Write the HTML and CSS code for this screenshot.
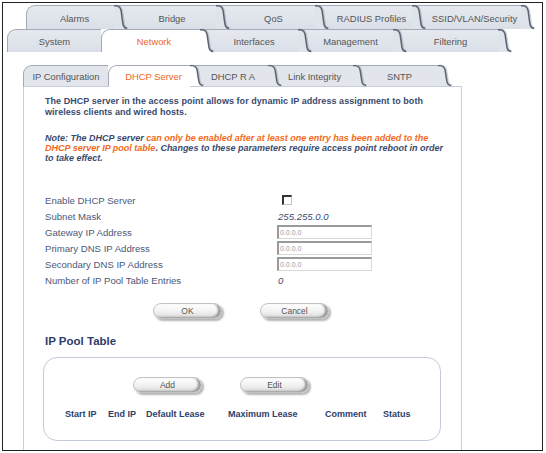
FILE: index.html
```html
<!DOCTYPE html>
<html lang="en">
<head>
    <meta charset="UTF-8">
    <title>DHCP Server</title>
    <link rel="stylesheet" href="styles.css">
</head>
<body>
    <div class="frame">
        <div class="tabs row-top">
            <div class="tab">Alarms<svg class="edge" viewBox="0 0 14 24" preserveAspectRatio="none"><path class="shade" d="M1 1 H3 C6.5 1 7.8 2.8 8.6 5.8 L10.6 19 C11.3 22 12.8 23.3 15 23.3"/><path class="fill" d="M0 0 H2 C6 0 7 2.5 7.8 5.5 L9.8 19 C10.5 22 12 24 14 24 H0 Z"/><path class="line" d="M0 0.75 H2 C5.5 0.75 6.8 2.5 7.6 5.5 L9.6 19 C10.3 22 11.8 23.3 14 23.3"/></svg></div>
            <div class="tab">Bridge<svg class="edge" viewBox="0 0 14 24" preserveAspectRatio="none"><path class="shade" d="M1 1 H3 C6.5 1 7.8 2.8 8.6 5.8 L10.6 19 C11.3 22 12.8 23.3 15 23.3"/><path class="fill" d="M0 0 H2 C6 0 7 2.5 7.8 5.5 L9.8 19 C10.5 22 12 24 14 24 H0 Z"/><path class="line" d="M0 0.75 H2 C5.5 0.75 6.8 2.5 7.6 5.5 L9.6 19 C10.3 22 11.8 23.3 14 23.3"/></svg></div>
            <div class="tab">QoS<svg class="edge" viewBox="0 0 14 24" preserveAspectRatio="none"><path class="shade" d="M1 1 H3 C6.5 1 7.8 2.8 8.6 5.8 L10.6 19 C11.3 22 12.8 23.3 15 23.3"/><path class="fill" d="M0 0 H2 C6 0 7 2.5 7.8 5.5 L9.8 19 C10.5 22 12 24 14 24 H0 Z"/><path class="line" d="M0 0.75 H2 C5.5 0.75 6.8 2.5 7.6 5.5 L9.6 19 C10.3 22 11.8 23.3 14 23.3"/></svg></div>
            <div class="tab">RADIUS Profiles<svg class="edge" viewBox="0 0 14 24" preserveAspectRatio="none"><path class="shade" d="M1 1 H3 C6.5 1 7.8 2.8 8.6 5.8 L10.6 19 C11.3 22 12.8 23.3 15 23.3"/><path class="fill" d="M0 0 H2 C6 0 7 2.5 7.8 5.5 L9.8 19 C10.5 22 12 24 14 24 H0 Z"/><path class="line" d="M0 0.75 H2 C5.5 0.75 6.8 2.5 7.6 5.5 L9.6 19 C10.3 22 11.8 23.3 14 23.3"/></svg></div>
            <div class="tab">SSID/VLAN/Security<svg class="edge" viewBox="0 0 14 24" preserveAspectRatio="none"><path class="shade" d="M1 1 H3 C6.5 1 7.8 2.8 8.6 5.8 L10.6 19 C11.3 22 12.8 23.3 15 23.3"/><path class="fill" d="M0 0 H2 C6 0 7 2.5 7.8 5.5 L9.8 19 C10.5 22 12 24 14 24 H0 Z"/><path class="line" d="M0 0.75 H2 C5.5 0.75 6.8 2.5 7.6 5.5 L9.6 19 C10.3 22 11.8 23.3 14 23.3"/></svg></div>
        </div>

        <div class="tabs row-main">
            <div class="tab">System</div>
            <div class="tab active">Network<svg class="edge" viewBox="0 0 14 24" preserveAspectRatio="none"><path class="shade" d="M1 1 H3 C6.5 1 7.8 2.8 8.6 5.8 L10.6 19 C11.3 22 12.8 23.3 15 23.3"/><path class="fill" d="M0 0 H2 C6 0 7 2.5 7.8 5.5 L9.8 19 C10.5 22 12 24 14 24 H0 Z"/><path class="line" d="M0 0.75 H2 C5.5 0.75 6.8 2.5 7.6 5.5 L9.6 19 C10.3 22 11.8 23.3 14 23.3"/></svg></div>
            <div class="tab">Interfaces<svg class="edge" viewBox="0 0 14 24" preserveAspectRatio="none"><path class="shade" d="M1 1 H3 C6.5 1 7.8 2.8 8.6 5.8 L10.6 19 C11.3 22 12.8 23.3 15 23.3"/><path class="fill" d="M0 0 H2 C6 0 7 2.5 7.8 5.5 L9.8 19 C10.5 22 12 24 14 24 H0 Z"/><path class="line" d="M0 0.75 H2 C5.5 0.75 6.8 2.5 7.6 5.5 L9.6 19 C10.3 22 11.8 23.3 14 23.3"/></svg></div>
            <div class="tab">Management<svg class="edge" viewBox="0 0 14 24" preserveAspectRatio="none"><path class="shade" d="M1 1 H3 C6.5 1 7.8 2.8 8.6 5.8 L10.6 19 C11.3 22 12.8 23.3 15 23.3"/><path class="fill" d="M0 0 H2 C6 0 7 2.5 7.8 5.5 L9.8 19 C10.5 22 12 24 14 24 H0 Z"/><path class="line" d="M0 0.75 H2 C5.5 0.75 6.8 2.5 7.6 5.5 L9.6 19 C10.3 22 11.8 23.3 14 23.3"/></svg></div>
            <div class="tab">Filtering<svg class="edge" viewBox="0 0 14 24" preserveAspectRatio="none"><path class="shade" d="M1 1 H3 C6.5 1 7.8 2.8 8.6 5.8 L10.6 19 C11.3 22 12.8 23.3 15 23.3"/><path class="fill" d="M0 0 H2 C6 0 7 2.5 7.8 5.5 L9.8 19 C10.5 22 12 24 14 24 H0 Z"/><path class="line" d="M0 0.75 H2 C5.5 0.75 6.8 2.5 7.6 5.5 L9.6 19 C10.3 22 11.8 23.3 14 23.3"/></svg></div>
        </div>

        <div class="tabs sub">
            <div class="tab">IP Configuration</div>
            <div class="tab active">DHCP Server<svg class="edge" viewBox="0 0 14 24" preserveAspectRatio="none"><path class="shade" d="M1 1 H3 C6.5 1 7.8 2.8 8.6 5.8 L10.6 19 C11.3 22 12.8 23.3 15 23.3"/><path class="fill" d="M0 0 H2 C6 0 7 2.5 7.8 5.5 L9.8 19 C10.5 22 12 24 14 24 H0 Z"/><path class="line" d="M0 0.75 H2 C5.5 0.75 6.8 2.5 7.6 5.5 L9.6 19 C10.3 22 11.8 23.3 14 23.3"/></svg></div>
            <div class="tab">DHCP R A<svg class="edge" viewBox="0 0 14 24" preserveAspectRatio="none"><path class="shade" d="M1 1 H3 C6.5 1 7.8 2.8 8.6 5.8 L10.6 19 C11.3 22 12.8 23.3 15 23.3"/><path class="fill" d="M0 0 H2 C6 0 7 2.5 7.8 5.5 L9.8 19 C10.5 22 12 24 14 24 H0 Z"/><path class="line" d="M0 0.75 H2 C5.5 0.75 6.8 2.5 7.6 5.5 L9.6 19 C10.3 22 11.8 23.3 14 23.3"/></svg></div>
            <div class="tab">Link Integrity<svg class="edge" viewBox="0 0 14 24" preserveAspectRatio="none"><path class="shade" d="M1 1 H3 C6.5 1 7.8 2.8 8.6 5.8 L10.6 19 C11.3 22 12.8 23.3 15 23.3"/><path class="fill" d="M0 0 H2 C6 0 7 2.5 7.8 5.5 L9.8 19 C10.5 22 12 24 14 24 H0 Z"/><path class="line" d="M0 0.75 H2 C5.5 0.75 6.8 2.5 7.6 5.5 L9.6 19 C10.3 22 11.8 23.3 14 23.3"/></svg></div>
            <div class="tab">SNTP<svg class="edge" viewBox="0 0 14 24" preserveAspectRatio="none"><path class="shade" d="M1 1 H3 C6.5 1 7.8 2.8 8.6 5.8 L10.6 19 C11.3 22 12.8 23.3 15 23.3"/><path class="fill" d="M0 0 H2 C6 0 7 2.5 7.8 5.5 L9.8 19 C10.5 22 12 24 14 24 H0 Z"/><path class="line" d="M0 0.75 H2 C5.5 0.75 6.8 2.5 7.6 5.5 L9.6 19 C10.3 22 11.8 23.3 14 23.3"/></svg></div>
            <div class="spacer"></div>
        </div>

        <div class="panel">
            <p class="intro">The DHCP server in the access point allows for dynamic IP address assignment to both<br>wireless clients and wired hosts.</p>
            <p class="note">Note: The DHCP server <em>can only be enabled after at least one entry has been added to the<br>DHCP server IP pool table</em>. Changes to these parameters require access point reboot in order<br>to take effect.</p>

            <div class="form">
                <span>Enable DHCP Server</span>
                <span><span class="check"></span></span>
                <span>Subnet Mask</span>
                <span class="value">255.255.0.0</span>
                <span>Gateway IP Address</span>
                <span><input type="text" value="0.0.0.0"></span>
                <span>Primary DNS IP Address</span>
                <span><input type="text" value="0.0.0.0"></span>
                <span>Secondary DNS IP Address</span>
                <span><input type="text" value="0.0.0.0"></span>
                <span>Number of IP Pool Table Entries</span>
                <span class="value">0</span>
            </div>

            <div class="actions">
                <button>OK</button>
                <button>Cancel</button>
            </div>

            <h3>IP Pool Table</h3>

            <div class="pool">
                <div class="pool-actions">
                    <button>Add</button>
                    <button>Edit</button>
                </div>
                <div class="pool-head">
                    <span>Start IP</span>
                    <span>End IP</span>
                    <span>Default Lease</span>
                    <span>Maximum Lease</span>
                    <span>Comment</span>
                    <span>Status</span>
                </div>
            </div>
        </div>
    </div>
</body>
</html>
```

FILE: styles.css
```css
body {
    margin: 0;
    font-family: "Liberation Sans", Arial, Helvetica, sans-serif;
    background: #fff;
}

.frame {
    margin: 2px;
    width: 541px;
    height: 449px;
    box-sizing: border-box;
    border: 1px solid #222;
    display: flex;
    flex-direction: column;
    overflow: hidden;
}

/* tab rows */
.tabs {
    display: flex;
}

.row-top {
    margin-top: 2px;
    padding-left: 23px;
    height: 24px;
}

.row-main {
    padding-left: 4px;
    height: 23px;
}

.sub {
    margin: 13px 0 0 20px;
    width: 439px;
    height: 22px;
}

.tab {
    position: relative;
    box-sizing: border-box;
    height: 100%;
    flex: none;
    display: flex;
    align-items: center;
    justify-content: center;
    background: linear-gradient(#e6e9ef, #dadfe7);
    border-top: 1px solid #a3aab7;
    font-size: 9.4px;
    color: #555;
    padding-top: 1px;
}

.tab:first-child {
    border-left: 1px solid #a3aab7;
    border-top-left-radius: 9px;
}

.tab.active {
    background: #fff;
    color: #f0651f;
    border-left: 1px solid #a3aab7;
    border-top-left-radius: 9px;
}

.edge {
    position: absolute;
    left: 100%;
    top: -1px;
    width: 13px;
    height: calc(100% + 1px);
    z-index: 1;
    overflow: visible;
}

.edge .fill { fill: #dfe3ea; }
.tab.active .edge .fill { fill: #fff; }

.edge .line {
    fill: none;
    stroke: #5b6271;
    stroke-width: 1.6;
}

.edge .shade {
    fill: none;
    stroke: #9aa0ab;
    stroke-width: 2.4;
    opacity: .5;
}

.row-top .tab:nth-child(1) { width: 88px; padding-left: 8px; }
.row-top .tab:nth-child(2) { width: 102px; padding-left: 14px; }
.row-top .tab:nth-child(3) { width: 99px; padding-left: 16px; }
.row-top .tab:nth-child(4) { width: 97px; padding-left: 16px; }
.row-top .tab:nth-child(5) { width: 109px; padding-left: 16px; }

.row-main .tab:nth-child(1) { width: 94px; }
.row-main .tab:nth-child(2) { width: 99px; padding-left: 6px; }
.row-main .tab:nth-child(3) { width: 98px; padding-left: 10px; }
.row-main .tab:nth-child(4) { width: 95px; padding-left: 10px; }
.row-main .tab:nth-child(5) { width: 105px; padding-left: 10px; }

.sub .tab {
    border-bottom: 1px solid #c8cddc;
    background: #e2e5ec;
}
.sub .edge .fill { fill: #e2e5ec; }
.sub .tab.active { border-bottom-color: #fff; background: #fff; }
.sub .tab.active .edge .fill { fill: #fff; }

.sub .tab:nth-child(1) { width: 85px; }
.sub .tab:nth-child(2) { width: 82px; padding-left: 8px; }
.sub .tab:nth-child(3) { width: 78px; padding-left: 8px; }
.sub .tab:nth-child(4) { width: 85px; padding-left: 8px; }
.sub .tab:nth-child(5) { width: 85px; padding-left: 8px; }

.sub .spacer {
    flex: 1;
    border-bottom: 1px solid #c8cddc;
}

/* panel */
.panel {
    margin-left: 20px;
    width: 439px;
    flex: 1;
    box-sizing: border-box;
    border-left: 1px solid #c8cddc;
    border-right: 1px solid #c8cddc;
    padding: 9px 0 0 21px;
    color: #3a4a6e;
}

.intro {
    margin: 0;
    font-size: 9px;
    font-weight: bold;
    line-height: 11px;
    letter-spacing: 0.05px;
}

.note {
    margin: 15px 0 0;
    font-size: 9px;
    font-weight: bold;
    font-style: italic;
    line-height: 10px;
}

.note em {
    color: #f26a21;
}

.form {
    display: grid;
    grid-template-columns: 232px auto;
    grid-auto-rows: 16px;
    align-items: center;
    margin-top: 29px;
    font-size: 9.6px;
    color: #4c5877;
}

.form .value {
    font-style: italic;
    color: #3f4d70;
    padding-left: 1px;
}

.check {
    display: block;
    margin-left: 5px;
    width: 7px;
    height: 7px;
    border: 1px solid #c4c4c4;
    border-top: 2px solid #333;
    border-left: 2px solid #333;
}

.form input {
    display: block;
    box-sizing: border-box;
    width: 95px;
    height: 14px;
    margin: 0;
    padding: 0 0 0 1px;
    border: 1px solid #d8d8d8;
    border-top: 2px solid #9a9a9a;
    border-left: 2px solid #9a9a9a;
    font-family: inherit;
    font-size: 7px;
    color: #9a9a9a;
}

button {
    width: 69px;
    height: 16px;
    padding: 0;
    border: 1px solid #c2c2c2;
    border-radius: 8px;
    background: linear-gradient(#ffffff, #f1f1f1 55%, #d9d9d9);
    box-shadow: inset -3px -1px 2px #9c9c9c, 2px 2px 2px #b5b5b5;
    font-family: inherit;
    font-size: 8.5px;
    color: #555;
}

.actions {
    display: flex;
    gap: 38px;
    margin: 15px 0 0 108px;
}

h3 {
    margin: 15px 0 0;
    font-size: 11.5px;
    line-height: 14px;
    color: #2e3d6b;
}

.pool {
    margin: 9px 0 0 -2px;
    width: 398px;
    height: 84px;
    box-sizing: border-box;
    border: 1px solid #c3cadc;
    border-radius: 14px;
    padding-top: 19px;
}

.pool-actions {
    display: flex;
    gap: 38px;
    margin-left: 89px;
}

.pool-head {
    display: grid;
    grid-template-columns: 43px 38px 82px 97px 58px auto;
    margin: 15px 0 0 21px;
    font-size: 9px;
    font-weight: bold;
    line-height: 12px;
    color: #2e3d6b;
}
```
